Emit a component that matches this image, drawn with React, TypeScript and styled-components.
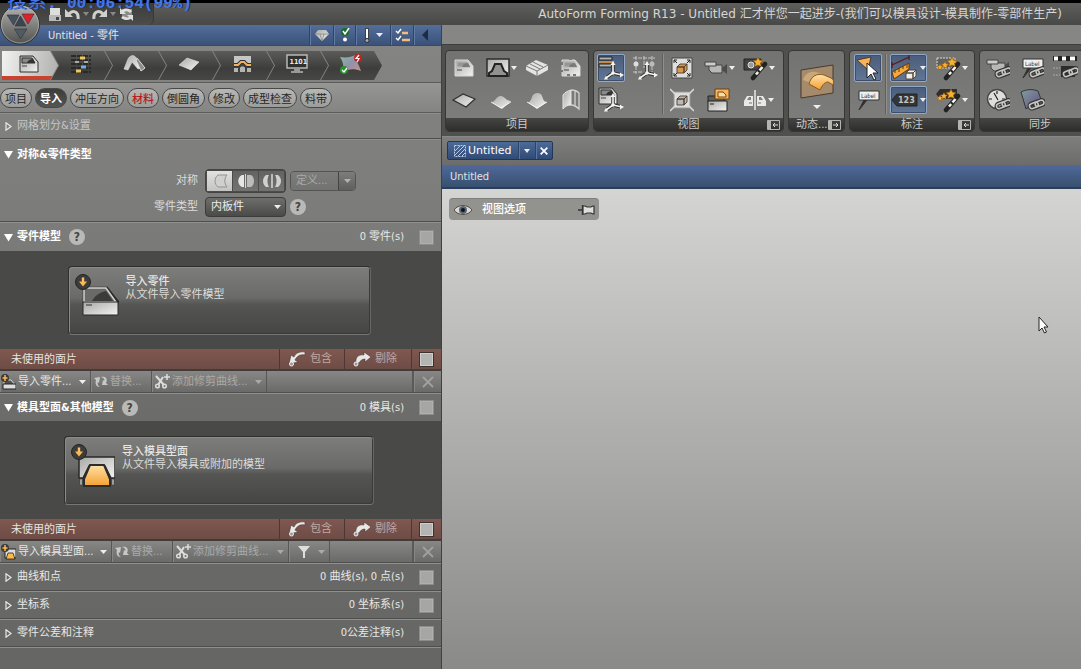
import React from "react";
import styled, { createGlobalStyle, css } from "styled-components";

const ui = `"DejaVu Sans Condensed", "Noto Sans CJK SC", sans-serif`;
const wide = `"DejaVu Sans", "Noto Sans CJK SC", sans-serif`;
const cjk = `"Noto Sans CJK SC", sans-serif`;

const GlobalStyle = createGlobalStyle`
  * { box-sizing: border-box; }
  body { margin: 0; background: #6b6b69; font: 11px/14px ${ui}; color: #e4e4e2; }
  button, select, input { font: inherit; color: inherit; margin: 0; }
  button { border: 0; background: none; padding: 0; }
  svg { display: block; flex: none; }
  h1, h2, h3 { margin: 0; font-size: inherit; font-weight: normal; }
`;

/* ---------- frame ---------- */
const Window = styled.div`
  display: flex; flex-direction: column; min-height: 100vh; position: relative; overflow: hidden;
`;
const TitleBar = styled.header`
  display: flex; justify-content: space-between; height: 25px; border-top: 3px solid #000;
  background: linear-gradient(#5e5e5c, #484846);
`;
const QuickBar = styled.div`
  display: flex; align-items: center; gap: 3px; width: 154px; padding-left: 48px;
  border-right: 1px solid #383836; border-bottom-right-radius: 6px;
  background: linear-gradient(#3c3c3a, #4c4c4a);
`;
const AppTitle = styled.h1`
  padding-right: 19px; font: 12px/22px ${wide}; white-space: nowrap; color: #d6d6d4;
`;
const Overlay = styled.div`
  position: absolute; left: 7px; top: -11px; z-index: 3; white-space: nowrap;
  font: 20px/22px ${cjk}; color: #4676e4; text-shadow: 1px 0 #16306e;
`;
const Clock = styled.span`font: 700 16px/22px "Liberation Mono", monospace;`;
const LogoButton = styled.button`position: absolute; left: 0; top: 4px; z-index: 2;`;
const Body = styled.div`
  flex: 1; display: grid; grid-template-columns: minmax(0, 441px) minmax(0, 1fr);
`;

/* ---------- left panel ---------- */
const Panel = styled.aside`
  display: flex; flex-direction: column; min-width: 0;
  background: linear-gradient(#858583, #7a7a78 35%, #6c6c6a 60%, #666664);
`;
const PanelHead = styled.div`
  display: flex; height: 21px; border-bottom: 1px solid #3a4a66;
  background: linear-gradient(#536e9b, #3a5279);
`;
const PanelTitle = styled.h2`flex: 1; padding-left: 48px; line-height: 21px;`;
const HeadButton = styled.button<{ $w: number }>`
  display: flex; align-items: center; justify-content: center; gap: 6px; width: ${p => p.$w}px;
  border-left: 1px solid #2f4468; box-shadow: inset 1px 0 #627ba5;
`;
const Steps = styled.nav`
  display: flex; padding: 5px 2px 2px; height: 37px; border-bottom: 1px solid #5c5c5a;
`;
const Step = styled.button<{ $active?: boolean }>`
  height: 29px; display: flex; align-items: center; justify-content: center;
  width: 61px; margin-left: -7px; padding: 0 2px 4px 0;
  background: linear-gradient(#5b5b59, #3d3d3b 60%, #474745);
  clip-path: polygon(0 0, calc(100% - 8px) 0, 100% 50%, calc(100% - 8px) 100%, 0 100%, 8px 50%);
  ${p => p.$active && css`
    width: 56px; margin-left: 0; border-bottom: 4px solid #c8432f; padding-bottom: 0;
    background: linear-gradient(100deg, #f2f2f0, #b0b0ae);
    clip-path: polygon(0 0, calc(100% - 8px) 0, 100% 50%, calc(100% - 8px) 100%, 0 100%);
  `}
`;
const Pills = styled.nav`
  display: flex; align-items: center; gap: 3px; height: 30px; border-bottom: 1px solid #5c5c5a;
  background: linear-gradient(#969694, #848482);
`;
const Pill = styled.button<{ $tone?: "active" | "alert" }>`
  height: 20px; padding: 0 4px; border: 1px solid #484846; border-radius: 10px;
  font: 11px/16px ${cjk}; white-space: nowrap; color: #262624;
  background: linear-gradient(#b8b8b6, #9c9c9a);
  ${p => p.$tone === "active" && css`background: linear-gradient(#3c3c3a, #555553); color: #fff; font-weight: 700;`}
  ${p => p.$tone === "alert" && css`color: #b81c14; font-weight: 500;`}
`;
const SectionHead = styled.div<{ $h: number; $dim?: boolean }>`
  display: flex; align-items: center; height: ${p => p.$h}px; padding: 0 7px 0 4px;
  border-top: 1px solid #8f8f8d; color: ${p => (p.$dim ? "#c6c6c4" : "#e8e8e6")};
`;
const Section = styled.section<{ $line?: boolean }>`
  ${p => p.$line && css`border-bottom: 1px solid #4e4e4c;`}
`;
const Toggle = styled.button<{ $bold?: boolean }>`
  display: flex; align-items: center; gap: 4px; white-space: nowrap;
  font: ${p => (p.$bold ? 700 : 400)} 11px/16px ${ui}; color: ${p => (p.$bold ? "#fff" : "inherit")};
`;
const Help = styled.button`
  width: 16px; height: 16px; margin-left: 8px; border-radius: 50%; background: #b9b9b7; color: #444442;
  font: 700 12px/16px ${ui};
`;
const Count = styled.span`margin-left: auto; padding-right: 15px; white-space: nowrap;`;
const Check = styled.input<{ $framed?: boolean }>`
  appearance: none; width: 15px; height: 15px; border: 1px solid ${p => (p.$framed ? "#3e3230" : "#8c8c8a")};
  background: ${p => (p.$framed ? "#b4b4b2" : "#a6a6a4")}; box-shadow: inset 0 0 0 1px ${p => (p.$framed ? "#cfcfcd" : "#b0b0ae")};
`;
const Form = styled.div`
  display: grid; grid-template-columns: 198px 1fr; column-gap: 7px; row-gap: 2px; padding: 0 0 2px;
`;
const FormLabel = styled.label`text-align: right; align-self: center; color: #dcdcda;`;
const Line = styled.div`display: flex; align-items: center; gap: 4px; height: 24px; ${Help} { margin-left: 0; }`;
const Segments = styled.div`
  display: flex; width: 81px; height: 24px; padding: 1px; border: 1px solid #444442; border-radius: 4px; background: #4c4c4a; gap: 1px;
`;
const Segment = styled.button<{ $on?: boolean }>`
  flex: 1; display: flex; align-items: center; justify-content: center;
  background: ${p => (p.$on ? "linear-gradient(#e2e2e0, #c4c4c2)" : "linear-gradient(#636361, #737371)")};
`;
const Split = styled.div`
  display: flex; width: 66px; height: 20px; border: 1px solid #545452; border-radius: 4px; overflow: hidden;
`;
const SplitMain = styled.button`flex: 1; text-align: left; padding-left: 5px; color: #a9a9a7; background: linear-gradient(#7c7c7a, #737371);`;
const SplitDrop = styled.button`
  width: 17px; display: flex; align-items: center; justify-content: center; border-left: 1px solid #444442;
  background: linear-gradient(#7d7d7b, #5f5f5d);
`;
const SelectBox = styled.div`position: relative; width: 81px; height: 20px;`;
const Select = styled.select`
  appearance: none; width: 100%; height: 20px; padding: 0 5px; border: 1px solid #3c3c3a; border-radius: 4px;
  background: linear-gradient(#6e6e6c, #4a4a48); color: #ececea; line-height: 16px;
`;
const SelectCaret = styled.span`position: absolute; right: 5px; top: 8px; pointer-events: none;`;
const Well = styled.div`display: flex; justify-content: center; height: 98px; padding: 15px 3px 14px 0; background: #494947;`;
const ImportCard = styled.button<{ $w: number }>`
  display: flex; align-items: flex-start; width: ${p => p.$w}px; padding: 7px 6px; gap: 7px; text-align: left;
  border: 1px solid #2e2e2c; border-right-color: #666664; border-bottom-color: #767674; border-radius: 4px;
  box-shadow: inset 1px 1px #8c8c8a, inset -1px -1px #3a3a38;
  background: linear-gradient(#7d7d7b, #6a6a68 46%, #555553 56%, #454543);
`;
const CardText = styled.span`
  display: block; padding-top: 1px; line-height: 13px; color: #dcdcda; white-space: nowrap;
  strong { display: block; color: #e6e6e4; font-weight: 500; }
`;
const UnusedBar = styled.div`
  display: flex; height: 22px; border-bottom: 2px solid #413c3a; background: linear-gradient(#7f5850, #6e4c46);
`;
const UnusedLabel = styled.span`flex: 1; padding-left: 11px; line-height: 22px;`;
const UnusedCell = styled.button<{ $w: number }>`
  display: flex; align-items: center; gap: 4px; width: ${p => p.$w}px; padding-left: 8px;
  border-left: 1px solid #4d3733; color: #bea8a4;
`;
const UnusedTick = styled.span`display: flex; align-items: center; padding: 0 7px; border-left: 1px solid #4d3733;`;
const Tools = styled.div`
  display: flex; height: 22px; border-bottom: 1px solid #50504e; background: linear-gradient(#878785, #6a6a68);
`;
const Tool = styled.button<{ $w?: number; $off?: boolean }>`
  display: flex; align-items: center; gap: 2px; flex: ${p => (p.$w ? `0 0 ${p.$w}px` : "1")}; white-space: nowrap;
  border-right: 1px solid #575755; padding: 0 4px 0 ${p => (p.$off ? 3 : 1)}px; color: ${p => (p.$off ? "#aaaaa8" : "#e6e6e4")};
  box-shadow: inset 1px 0 #868684;
  &:last-child { border: 0; padding: 0; justify-content: center; }
`;
const ToolText = styled.span`flex: 1; text-align: left;`;
const Filler = styled.span`flex: 1; border-right: 2px solid #5a5a58;`;

/* ---------- right side ---------- */
const Work = styled.main`display: flex; flex-direction: column; min-width: 0; border-left: 1px solid #41413f;`;
const Strip = styled.div`height: 20px; background: #868685; border-bottom: 1px solid #3e3e3c;`;
const Ribbon = styled.div`display: flex; gap: 4px; height: 91px; padding: 5px 3px 4px; background: #50504e; overflow: hidden;`;
const Group = styled.section<{ $w: number }>`
  flex: 0 0 ${p => p.$w}px; display: flex; flex-direction: column; border: 1px solid #373735; border-radius: 4px;
  overflow: hidden; background: linear-gradient(#737371, #7e7e7c);
`;
const GroupBody = styled.div`display: flex; flex: 1; padding-top: 1px;`;
const GroupName = styled.h3`
  display: flex; align-items: center; justify-content: center; height: 13px; line-height: 13px; position: relative;
  background: linear-gradient(#454543, #2d2d2b); color: #cdcdcb; white-space: nowrap;
`;
const LeadName = styled.span`flex: 1; padding-left: 7px;`;
const Expand = styled.button`position: absolute; right: 3px; top: 2px;`;
const Cells = styled.div<{ $cols: string }>`
  display: grid; grid-template-columns: ${p => p.$cols}; grid-template-rows: 32px 32px; align-items: center; justify-items: center;
`;
const Sep = styled.div`width: 2px; margin: 2px 0 4px; border-left: 1px solid #5f5f5d; border-right: 1px solid #90908e;`;
const IconButton = styled.button<{ $on?: boolean }>`
  display: flex; align-items: center; justify-content: center; gap: 1px; min-width: 28px; height: 28px;
  border: 1px solid ${p => (p.$on ? "#91a8c8" : "transparent")}; border-radius: 2px;
  ${p => p.$on && css`background: linear-gradient(#4a5d7a, #617795); box-shadow: inset 0 0 0 1px #3c4f6c;`}
`;
const BigButton = styled.button`flex: 1; display: flex; flex-direction: column; align-items: center; padding-top: 11px; gap: 4px;`;
const Tabs = styled.div`height: 29px; padding: 4px 5px; background: linear-gradient(#7e7e7c, #6c6c6a); border-top: 1px solid #888886;`;
const DocTab = styled.div`
  display: flex; width: 106px; height: 19px; border: 1px solid #233653; border-radius: 2px;
  background: linear-gradient(#4d6b98, #2f4a75);
`;
const DocName = styled.button`flex: 1; display: flex; align-items: center; gap: 2px; padding-left: 6px; font: 11px/16px ${wide}; color: #fff;`;
const DocAction = styled.button`width: 17px; display: flex; align-items: center; justify-content: center; border-left: 1px solid #2c4469; box-shadow: inset 1px 0 #5c77a2;`;
const DocHead = styled.h2`
  height: 24px; padding-left: 8px; line-height: 23px; border-bottom: 2px solid #2b3d59;
  background: linear-gradient(#50699a, #38506f);
`;
const Canvas = styled.div`flex: 1; position: relative; padding: 9px 7px; background: linear-gradient(#d4d4d2, #8a8a88);`;
const ViewOptions = styled.button`
  display: flex; align-items: center; width: 150px; height: 22px; padding: 0 4px; border-radius: 4px;
  background: #92928f; border-top: 1px solid #7e7e7c; color: #fff;
  span { flex: 1; text-align: left; padding-left: 9px; font-weight: 500; }
`;
const Cursor = styled.span`position: absolute; left: 596px; top: 127px;`;

/* ---------- drawings ---------- */
type DrawProps = { w?: number; h?: number; box?: string; children: React.ReactNode };
const Draw = ({ w = 24, h = 24, box, children }: DrawProps) => (
  <svg width={w} height={h} viewBox={box ?? `0 0 ${w} ${h}`} fill="none" aria-hidden="true">{children}</svg>
);
const PaintStore = styled.svg`position: absolute;`;
const Paints = () => (
  <PaintStore width="0" height="0" aria-hidden="true">
    <defs>
      <linearGradient id="silver" x1="0" y1="0" x2="1" y2="1"><stop stopColor="#a8a8a6" /><stop offset="1" stopColor="#f4f4f2" /></linearGradient>
      <linearGradient id="gold" x1="0" y1="0" x2="0" y2="1"><stop stopColor="#ffe0a8" /><stop offset="1" stopColor="#f5a030" /></linearGradient>
      <linearGradient id="knob" x1="0" y1="0" x2="0" y2="1"><stop stopColor="#b4b4b2" /><stop offset="1" stopColor="#50504e" /></linearGradient>
      <linearGradient id="tint" x1="0" y1="0" x2="1" y2="1"><stop stopColor="#8fb9a0" /><stop offset=".5" stopColor="#8d93ad" /><stop offset="1" stopColor="#cf8f80" /></linearGradient>
      <linearGradient id="violet" x1="0" y1="0" x2="1" y2="1"><stop stopColor="#7f9f9c" /><stop offset=".6" stopColor="#6f6b8c" /><stop offset="1" stopColor="#83708c" /></linearGradient>
    </defs>
  </PaintStore>
);
const Caret = ({ c = "#eeeeec", w = 7 }: { c?: string; w?: number }) => (
  <svg width={w} height={4} viewBox="0 0 8 4" preserveAspectRatio="none" aria-hidden="true"><path d="M0 0h8L4 4z" fill={c} /></svg>
);
const Arrow = ({ open, c = "#e8e8e6" }: { open?: boolean; c?: string }) => (
  <Draw w={9} h={9}>{open ? <path d="M0 1h9L4.500 8.500z" fill="#fff" /> : <path d="M2 .8l5 3.700-5 3.700z" stroke={c} strokeWidth="1.200" />}</Draw>
);
const Door = ({ x = 0, y = 0, dark = false }: { x?: number; y?: number; dark?: boolean }) => (
  <g transform={`translate(${x} ${y})`}>
    <path d="M1 1h13l5 6v10H1z" fill="url(#silver)" stroke={dark ? "#30302e" : "#d8d8d6"} />
    <path d="M3 3h10l3 5H3z" fill={dark ? "#8a8a88" : "#969694"} stroke={dark ? "#30302e" : "#b8b8b6"} />
    <path d="M8 8c1-3 3-4 6-4l2 4z" fill={dark ? "#333331" : "#7a7a78"} />
    <path d="M3 11h5" stroke="#444442" />
  </g>
);
const Axes = () => (
  <g>
    <path d="M15 8v10M15 18l-7 5M15 18l9 2" stroke="#333331" strokeWidth="3.500" />
    <path d="M15 8v10M15 18l-7 5M15 18l9 2" stroke="#f4f4f2" strokeWidth="1.600" />
    <circle cx="15" cy="18" r="1.800" fill="#f4f4f2" /><path d="M12.500 10L15 6l2.500 4zM22 17.500l4 2.500-4 2.500zM10 24.500H6l2-4z" fill="#f4f4f2" />
  </g>
);
const Wand = () => (<><path d="M23 9L11 23" stroke="#222220" strokeWidth="4.500" strokeLinecap="round" /><path d="M20.500 12L14 19.500" stroke="#f4f4f2" strokeWidth="2.600" /><path d="M17.600 15.400l-1.500 1.700" stroke="#222220" strokeWidth="3" /></>);
const Star = ({ x, y, s = 1 }: { x: number; y: number; s?: number }) => (
  <path transform={`translate(${x} ${y}) scale(${s})`} d="M0-5l1.500 3.200 3.500.4-2.600 2.400.8 3.600L0 3l-3.200 1.600.8-3.600L-5-1.400l3.500-.4z" fill="#f8b030" stroke="#8a5510" strokeWidth=".6" />
);
const Chain = ({ x = 11, y = 14 }: { x?: number; y?: number }) => (
  <g transform={`translate(${x} ${y}) rotate(-20)`} strokeWidth="4" stroke="#333331"><rect x="-2" y="2" width="9" height="5" rx="2.500" /><rect x="4" y="2" width="9" height="5" rx="2.500" /><g stroke="#c4c4c2" strokeWidth="1.600"><rect x="-2" y="2" width="9" height="5" rx="2.500" /><rect x="4" y="2" width="9" height="5" rx="2.500" /></g></g>
);
const LabelNote = () => (<><path d="M8 12L3 22l8-10" fill="#30302e" stroke="#30302e" /><path d="M3 3h20v9H3z" fill="#efefed" stroke="#333331" /><text x="5" y="10" fontSize="6" fontFamily="DejaVu Sans Condensed, sans-serif" fill="#333331">Label</text></>);
const Box3d = ({ x, y, c }: { x: number; y: number; c: string }) => (
  <g transform={`translate(${x} ${y})`} fill={c} stroke="#4a3c2c" strokeWidth=".9"><path d="M0 3l3-3h7L7 3zM0 3h7v6H0zM7 3l3-3v6L7 9z" /></g>
);
const DropBadge = () => (<><circle cx="8" cy="8" r="7.500" fill="#3c3c3a" stroke="#242422" /><path d="M8 3.500v6" stroke="#ffc070" strokeWidth="2.400" /><path d="M4 7.500h8L8 12.500z" fill="#ffb850" /></>);

const Logo = () => (
  <Draw w={41} h={41}>
    <circle cx="20" cy="20.500" r="19.500" fill="url(#knob)" stroke="#30302e" /><circle cx="20" cy="20.500" r="18.500" stroke="#b4b4b2" strokeWidth=".7" />
    <g stroke="#333338" strokeWidth=".6"><path d="M7 11h12l-5.500 10z" fill="#45525c" /><path d="M22 10h12l-6 10z" fill="#e2202c" /><path d="M20.500 12l5.500 10H15z" fill="#39464f" /><path d="M14.500 25H27l-6.500 10z" fill="#4e5b63" /></g>
  </Draw>
);
const Undo = ({ flip }: { flip?: boolean }) => (
  <Draw w={15} h={14}><g transform={flip ? "translate(15 0) scale(-1 1)" : undefined}><path d="M4 7c4-5 10-2 9 5" stroke="#cfcfcd" strokeWidth="3" /><path d="M0 2v8h8z" fill="#cfcfcd" /></g></Draw>
);
const DieIcon = ({ w = 24 }: { w?: number }) => (
  <Draw w={w} h={20} box="0 0 24 20"><path d="M1 1h22v17H1z" fill="url(#silver)" stroke="#2c2c2a" strokeWidth="1.500" /><path d="M3 18v-3l3-2 3-7h6l3 7 3 2v3z" fill="#92928f" stroke="#222220" strokeWidth="2" /></Draw>
);
const Sheet = ({ dark }: { dark?: boolean }) => (<Draw w={24} h={18}><path d="M1 9l10-6 12 5-9 8z" fill="url(#silver)" stroke={dark ? "#333331" : "#ddd"} strokeWidth={dark ? 1.3 : .5} /></Draw>);
const Bump = ({ tall }: { tall?: boolean }) => (<Draw w={22} h={20}><path d={tall ? "M1 12c2 1 4-1 5-5s8-6 10-1c1 3 2 6 5 6l-10 7z" : "M1 12c3 1 5-5 9-6s6 5 11 5l-9 8z"} fill="url(#silver)" /><path d="M1 12l10 6 10-6" stroke="#fff" strokeWidth=".8" /></Draw>);
const Camera = () => (<Draw w={24} h={18}><path d="M5 6h13v8H8l-3-3z" fill="#b8b8b6" stroke="#444442" /><path d="M1 3h11v4H1z" fill="#ccccca" stroke="#444442" /><path d="M18 9l5-4v10l-5-4z" fill="#4c4c4a" /></Draw>);
const CarHalf = () => (<Draw w={24} h={22}><path d="M1 17v-5l3-5h6v10zM23 17v-5l-3-5h-6v10z" fill="#e8e8e6" /><path d="M4 11l2-3h2v3zM20 11l-2-3h-2v3z" fill="#80807e" /><path d="M6 14h3M15 14h3" stroke="#777775" /><path d="M12 1v20" stroke="#e8e8e6" strokeWidth="1.500" /></Draw>);
const ExpandIcon = ({ flip }: { flip?: boolean }) => (
  <Draw w={13} h={10}><g transform={flip ? "translate(13 0)" : undefined}><path d={flip ? "M-12.500.5h12v9h-12z" : "M.5.500h12v9H.5z"} stroke="#b4b4b2" /><path d={flip ? "M-12 1h3v8h-3z" : "M1 1h3v8H1z"} fill="#b4b4b2" /><path d={flip ? "M-8 5h5M-5 3l2 2-2 2" : "M11 5H6M8 3L6 5l2 2"} stroke="#dededc" /></g></Draw>
);
const PartIcon = () => (
  <Draw w={44} h={44}><path d="M9 14h23l11 14H9z" fill="#4c4c4a" stroke="#292927" strokeWidth="2.500" /><path d="M9 14h22l10 14H9z" fill="#6a6a68" stroke="#d2d2d0" strokeWidth="1.500" /><path d="M17 27c3-6 9-9 14-10l7 10z" fill="#3b3b39" /><path d="M8 28h35v13H8z" fill="url(#silver)" stroke="#292927" /><path d="M11 31h6" stroke="#333331" /><DropBadge /></Draw>
);
const ToolIcon = () => (
  <Draw w={44} h={44}><path d="M8 13h36v21h-4l-6-12H18l-6 12H8z" fill="url(#silver)" stroke="#282826" strokeWidth="1.500" /><path d="M13 42v-7l6-14h14l6 14v7z" fill="url(#gold)" stroke="#2c2c2a" strokeWidth="2" /><path d="M9 35h2v6H9zM41 35h2v6h-2z" fill="#c4c4c2" stroke="#333" strokeWidth=".5" /><DropBadge /></Draw>
);
const Include = () => (<Draw w={18} h={16}><path d="M17 1C11 0 7 3 6 6L3 4 1 13l9-2-3-2c2-4 5-6 10-5z" fill="#e8e8e6" stroke="#4d3733" strokeWidth=".6" /><circle cx="3.500" cy="13" r="2" stroke="#eee" fill="#999" /></Draw>);
const Exclude = () => (<Draw w={18} h={16}><path d="M3 12C2 6 6 3 11 4V1l7 5-6 5V8c-3 0-5 2-6 4z" fill="#e8e8e6" stroke="#4d3733" strokeWidth=".6" /><circle cx="3" cy="13" r="2" stroke="#eee" fill="#999" /></Draw>);
const Swap = () => (<Draw w={14} h={14}><path d="M0 3l6-1-1 6-1-1c-1 2 0 4 2 5C2 12 1 9 2 5zM14 10l-6 0 1-5 1 1c1-2 0-3-3-4 5-1 7 2 5 6z" fill="#c8c8c6" /></Draw>);
const Scissors = () => (<Draw w={15} h={15}><path d="M1 2l8 9M8 3L3 11" stroke="#ddd" strokeWidth="2" /><circle cx="2.500" cy="12" r="1.800" stroke="#ddd" strokeWidth="1.500" /><circle cx="9.500" cy="12" r="1.800" stroke="#ddd" strokeWidth="1.500" /><path d="M9 3h6M12 0v6" stroke="#ddd" strokeWidth="1.500" /></Draw>);
const MiniImport = ({ gold }: { gold?: boolean }) => (
  <Draw w={15} h={16}>{gold ? <><path d="M4 5h11v9H4z" fill="#ddd" stroke="#222" /><path d="M5 15l2-6h5l2 6z" fill="#ffb84a" stroke="#222" strokeWidth=".8" /></> : <><path d="M3 6h7l4 5H3z" fill="#50504e" stroke="#ddd" /><path d="M2 10h13v5H2z" fill="#ddd" stroke="#222" /></>}<circle cx="4" cy="4" r="4" fill="#3a3a38" /><path d="M4 1v6M1.500 4h5" stroke="#ffb850" strokeWidth="1.500" /></Draw>
);
const Cross = ({ c = "#a0a09e", s = 12, t = 1.8 }: { c?: string; s?: number; t?: number }) => (<Draw w={s} h={s} box="0 0 12 12"><path d="M1 1l10 10M11 1L1 11" stroke={c} strokeWidth={t} /></Draw>);
const Cone = ({ side = 0 }: { side?: number }) => (
  <Draw w={24} h={16}>
    {side === 0 && <path d="M10 2h9c-3 4-3 8 0 12h-9c-4-3-4-9 0-12z" fill="#d0d0ce" stroke="#939391" />}
    {side === 1 && <><path d="M10 2v12H8C3 12 3 4 8 2z" fill="#e6e6e4" /><path d="M13 2h4c4 2 4 10 0 12h-4z" fill="#bcbcba" /><path d="M11.500 1v14" stroke="#d8d8d6" /></>}
    {side === 2 && <><path d="M9 2H6C2 5 2 11 6 14h3C7 11 7 5 9 2zM15 2h3c4 3 4 9 0 12h-3c2-3 2-9 0-12z" fill="#d0d0ce" /><path d="M12 1v14" stroke="#d8d8d6" strokeWidth="1.500" /></>}
  </Draw>
);

const stepIcons: [string, React.ReactNode][] = [
  ["零件", <Draw w={22} h={20}><Door x={1} y={1} dark /></Draw>],
  ["方案", <Draw w={22} h={20}><path d="M1 2h20M1 6h20M1 10h20M1 14h20M1 18h20" stroke="#292927" strokeDasharray="5 1" strokeWidth="2" /><path d="M10 4h5M6 17h5" stroke="#f0c660" strokeWidth="3" /><path d="M5 8h4M14 8h4" stroke="#a8a8a6" strokeWidth="2" /><path d="M11 13h5" stroke="#74aee4" strokeWidth="3" /></Draw>],
  ["曲面", <Draw w={24} h={20}><path d="M1 15L5 5c3-5 7-4 9 0l4 9-3 1-6-7-4 8z" fill="url(#silver)" stroke="#ddd" strokeWidth=".6" /><path d="M14 4l8 10-4 3-4-9" fill="#8c8c8a" stroke="#ddd" /></Draw>],
  ["坯料", <Draw w={22} h={16}><path d="M1 9l8-7 12 4-8 8z" fill="url(#silver)" stroke="#eee" strokeWidth=".5" /></Draw>],
  ["工艺", <Draw w={20} h={20}><path d="M1 2h17v9h-3l-3-3H7l-3 3H1z" fill="#c6c6c4" /><path d="M1 11h4l3-3h3l3 3h4" stroke="#30302e" strokeWidth="4" /><path d="M1 11h4l3-3h3l3 3h4" stroke="#f2b060" strokeWidth="2" /><path d="M1 14h4v4H1zM14 14h4v4h-4zM7 18v-4c0-2 5-2 5 0v4z" fill="#b4b4b2" /></Draw>],
  ["模拟", <Draw w={22} h={20}><path d="M1 1h20v13H1z" fill="#30302e" stroke="#b8b8b6" strokeWidth="1.500" /><text x="3.500" y="10" fontSize="7" fontWeight="700" fontFamily="DejaVu Sans Condensed, sans-serif" fill="#e6e6e4">1101</text><path d="M8 15h6v2h3v2H5v-2h3z" fill="#999997" /></Draw>],
  ["评估", <Draw w={26} h={22}><path d="M2 4c6 1 12 0 15-2 1 6 4 10 6 16-7-3-13-2-18 1C6 13 5 9 2 4z" fill="url(#tint)" /><circle cx="20" cy="5" r="4" fill="#c8201c" /><path d="M21 2l-3 3.500h3L19 9" stroke="#fff" strokeWidth="1.200" /><circle cx="6" cy="17" r="4" fill="#2a922a" /><path d="M4 17l2 2 3-4" stroke="#fff" strokeWidth="1.300" /></Draw>],
];

const pills: [string, ("active" | "alert")?][] = [["项目"], ["导入", "active"], ["冲压方向"], ["材料", "alert"], ["倒圆角"], ["修改"], ["成型检查"], ["料带"]];

const UnusedFaces = ({ id }: { id: string }) => (
  <UnusedBar>
    <UnusedLabel id={id}>未使用的面片</UnusedLabel>
    <UnusedCell $w={65}><Include />包含</UnusedCell>
    <UnusedCell $w={67}><Exclude />剔除</UnusedCell>
    <UnusedTick><Check type="checkbox" $framed aria-labelledby={id} /></UnusedTick>
  </UnusedBar>
);

const Summary = ({ title, count, open, help, h }: { title: string; count: string; open?: boolean; help?: boolean; h: number }) => (
  <SectionHead $h={h}>
    <Toggle $bold={open} aria-expanded={!!open}><Arrow open={open} />{title}</Toggle>
    {help && <Help aria-label="帮助">?</Help>}
    <Count>{count}</Count>
    <Check type="checkbox" aria-label={title} />
  </SectionHead>
);

const LeftPanel = () => (
  <Panel>
    <PanelHead>
      <PanelTitle>Untitled - 零件</PanelTitle>
      <HeadButton $w={24} aria-label="质量"><Draw w={14} h={12}><path d="M3 1h8l3 4-7 7-7-7z" fill="url(#silver)" /><path d="M0 5h14M5 5l2 7 2-7" stroke="#888886" strokeWidth=".8" /></Draw></HeadButton>
      <HeadButton $w={22} aria-label="检查"><Draw w={10} h={14}><circle cx="5" cy="4" r="4" fill="#1d6b28" /><path d="M3 3l2 3 4-6" stroke="#fff" strokeWidth="1.500" /><circle cx="5" cy="11.500" r="2" fill="#fff" /></Draw></HeadButton>
      <HeadButton $w={35} aria-label="状态"><Draw w={6} h={15}><path d="M1.500.500h3v10h-3z" fill="#fff" stroke="#222" strokeWidth=".8" /><circle cx="3" cy="12.500" r="2" fill="#aaa" stroke="#333" /></Draw><Caret /></HeadButton>
      <HeadButton $w={23} aria-label="任务"><Draw w={15} h={14}><path d="M1 3l2 2 3-4M1 10l2 2 3-4" stroke="#fff" strokeWidth="1.400" /><path d="M7 5h6M7 12h8" stroke="#f0bd7c" strokeWidth="2.500" /></Draw></HeadButton>
      <HeadButton $w={28} aria-label="收起"><Draw w={16} h={12}><path d="M8 0L2 6l6 6" fill="#1d2c45" /></Draw></HeadButton>
    </PanelHead>
    <Steps>{stepIcons.map(([n, icon], i) => <Step key={n} $active={i === 0} aria-label={n}>{icon}</Step>)}</Steps>
    <Pills>{pills.map(([t, tone]) => <Pill key={t} $tone={tone}>{t}</Pill>)}</Pills>

    <Section $line>
      <SectionHead $h={25} $dim><Toggle aria-expanded={false}><Arrow />网格划分&amp;设置</Toggle></SectionHead>
    </Section>
    <Section $line>
      <SectionHead $h={30}><Toggle $bold aria-expanded><Arrow open />对称&amp;零件类型</Toggle></SectionHead>
      <Form>
        <FormLabel as="span">对称</FormLabel>
        <Line>
          <Segments role="group" aria-label="对称">
            <Segment $on aria-label="无"><Cone /></Segment><Segment aria-label="对称"><Cone side={1} /></Segment><Segment aria-label="双件"><Cone side={2} /></Segment>
          </Segments>
          <Split><SplitMain>定义...</SplitMain><SplitDrop aria-label="更多"><Caret c="#b4b4b2" /></SplitDrop></Split>
        </Line>
        <FormLabel htmlFor="part-type">零件类型</FormLabel>
        <Line>
          <SelectBox><Select id="part-type"><option>内板件</option></Select><SelectCaret><Caret /></SelectCaret></SelectBox>
          <Help aria-label="帮助">?</Help>
        </Line>
      </Form>
    </Section>

    <Section>
      <Summary title="零件模型" count="0 零件(s)" open help h={29} />
      <Well><ImportCard $w={303}><PartIcon /><CardText><strong>导入零件</strong>从文件导入零件模型</CardText></ImportCard></Well>
      <UnusedFaces id="unused-part" />
      <Tools>
        <Tool $w={91}><MiniImport /><ToolText>导入零件...</ToolText><Caret /></Tool>
        <Tool $w={61} $off><Swap /><ToolText>替换...</ToolText></Tool>
        <Tool $w={115} $off><Scissors /><ToolText>添加修剪曲线...</ToolText><Caret c="#aaaaa8" /></Tool>
        <Filler /><Tool $w={27} $off aria-label="删除"><Cross /></Tool>
      </Tools>
    </Section>
    <Section>
      <Summary title="模具型面&其他模型" count="0 模具(s)" open help h={28} />
      <Well><ImportCard $w={310}><ToolIcon /><CardText><strong>导入模具型面</strong>从文件导入模具或附加的模型</CardText></ImportCard></Well>
      <UnusedFaces id="unused-tool" />
      <Tools>
        <Tool $w={112}><MiniImport gold /><ToolText>导入模具型面...</ToolText><Caret /></Tool>
        <Tool $w={61} $off><Swap /><ToolText>替换...</ToolText></Tool>
        <Tool $w={116} $off><Scissors /><ToolText>添加修剪曲线...</ToolText><Caret c="#aaaaa8" /></Tool>
        <Tool $w={41} $off aria-label="筛选"><ToolText><Draw w={22} h={14}><path d="M6 1h12l-5 6v6h-2V7z" fill="#dededc" /></Draw></ToolText><Caret c="#aaaaa8" /></Tool>
        <Filler /><Tool $w={27} $off aria-label="删除"><Cross /></Tool>
      </Tools>
    </Section>
    <Section $line><Summary title="曲线和点" count="0 曲线(s), 0 点(s)" h={27} /></Section>
    <Section $line><Summary title="坐标系" count="0 坐标系(s)" h={27} /></Section>
    <Section $line><Summary title="零件公差和注释" count="0公差注释(s)" h={27} /></Section>
    <SectionHead $h={10} />
  </Panel>
);

const IB = ({ on, drop, name, children }: { on?: boolean; drop?: boolean; name: string; children: React.ReactNode }) => (
  <IconButton $on={on} aria-label={name}>{children}{drop && <Caret w={6} />}</IconButton>
);

const RibbonBar = () => (
  <Ribbon>
    <Group $w={144}>
      <GroupBody>
        <Cells $cols="36px 38px 34px 34px">
          <IB name="零件"><Draw w={20} h={20}><Door y={1} /></Draw></IB>
          <IB name="模具" drop><DieIcon /></IB>
          <IB name="工艺"><Draw w={24} h={18}><path d="M1 7l10-6 12 5v5l-11 6L1 11z" fill="#e4e4e2" /><path d="M1 7l11 5 11-6M12 12v5M5 5l10 5M8 3l10 5" stroke="#777775" /></Draw></IB>
          <IB name="方案"><Draw w={20} h={20}><Door y={1} /><path d="M1 4v3M1 12v2M6 17h3M12 17h3M8 1h3" stroke="#777775" strokeWidth="2" /></Draw></IB>
          <IB name="坯料"><Sheet dark /></IB>
          <IB name="曲面"><Bump /></IB>
          <IB name="拉延"><Bump tall /></IB>
          <IB name="剖面"><Draw w={20} h={22}><path d="M2 6c2-3 5-4 8-5v15c-3 0-6 1-8 4z" fill="url(#silver)" stroke="#e4e4e2" /><path d="M10 1c3 0 6 1 8 3v16c-2-2-5-4-8-4M14 2v15" stroke="#d2d2d0" strokeWidth="1.300" /></Draw></IB>
        </Cells>
      </GroupBody>
      <GroupName>项目</GroupName>
    </Group>

    <Group $w={191}>
      <GroupBody>
        <Cells $cols="34px 34px">
          <IB on name="冲压坐标"><Draw w={26} h={26}><path d="M1 2h13v3H1zM1 9h13v3H1z" fill="#b4b4b2" stroke="#222" /><path d="M1 7h15" stroke="#c48b4a" strokeWidth="2" /><Axes /></Draw></IB>
          <IB name="工位坐标"><Draw w={26} h={26}><path d="M4 1v18M12 1v12M20 1v18M1 3h22M1 17h10" stroke="#c4c4c2" strokeDasharray="4 1" /><circle cx="4" cy="9" r="2.500" fill="#ddd" /><circle cx="20" cy="9" r="2.500" fill="#bbb" /><Axes /></Draw></IB>
          <IB name="零件坐标"><Draw w={26} h={26}><Door dark /><Axes /></Draw></IB>
        </Cells>
        <Sep />
        <Cells $cols="36px 38px 40px">
          <IB name="全部显示"><Draw w={22} h={22}><path d="M1 1h20v20H1z" fill="#dededc" stroke="#444442" /><path d="M3 6V3h3M16 3h3v3M19 16v3h-3M6 19H3v-3M3 3l3 3M19 3l-3 3M19 19l-3-3M3 19l3-3" stroke="#222220" /><Box3d x={6} y={7} c="#d89a50" /></Draw></IB>
          <IB name="视角" drop><Camera /></IB>
          <IB name="截图" drop><Draw w={26} h={26}><path d="M2 4h17v11H2z" fill="#444442" stroke="#222" /><circle cx="9" cy="10" r="3" fill="#999" stroke="#ddd" /><Wand /><Star x={16} y={7} /></Draw></IB>
          <IB name="缩放"><Draw w={24} h={24}><path d="M4 4h16v16H4z" fill="#dededc" stroke="#999" /><path d="M0 1l5 5M24 1l-5 5M24 23l-5-5M0 23l5-5" stroke="#ddd" strokeWidth="1.500" /><Box3d x={7} y={8} c="#bababa" /></Draw></IB>
          <IB name="窗口"><Draw w={26} h={24}><path d="M2 8h13l5 6H2z" fill="#5c5c5a" stroke="#222" /><path d="M2 13h19v10H2z" fill="url(#silver)" stroke="#222" /><path d="M4 16h4" stroke="#222" /><path d="M9 1h14v10H9z" fill="#f7b45a" stroke="#6a4010" /><path d="M12 9V4h5l3 3v2z" fill="#ffdca4" stroke="#7a4510" /></Draw></IB>
          <IB name="镜像" drop><CarHalf /></IB>
        </Cells>
      </GroupBody>
      <GroupName>视图<Expand aria-label="展开视图"><ExpandIcon /></Expand></GroupName>
    </Group>

    <Group $w={57}>
      <GroupBody>
        <BigButton aria-label="动态剖面"><Draw w={36} h={38}><path d="M2 7l32-5v28L2 35z" fill="#a68a6c" stroke="#4a3a2a" /><path d="M4 17c2-7 8-9 13-8l9 3-12 9z" fill="#c8a878" /><path d="M10 21c2-8 8-11 15-9l7 3c3 2 3 4 2 7l-5-3c-4 0-6 4-8 8z" fill="url(#gold)" stroke="#8a5a18" /></Draw><Caret w={8} /></BigButton>
      </GroupBody>
      <GroupName><LeadName>动态...</LeadName><Expand aria-label="展开动态剖面"><ExpandIcon flip /></Expand></GroupName>
    </Group>

    <Group $w={126}>
      <GroupBody>
        <Cells $cols="35px">
          <IB on name="选择"><Draw w={24} h={26}><path d="M1 5l14-3-3 13z" fill="#f7b45a" stroke="#4a3a2a" /><path d="M11 8v15l4-4 3 6 2-1-3-6h5z" fill="#fff" stroke="#222" /></Draw></IB>
          <IB name="标签"><Draw w={24} h={24}><LabelNote /></Draw></IB>
        </Cells>
        <Sep />
        <Cells $cols="42px 44px">
          <IB on drop name="测量"><Draw w={28} h={26}><path d="M1 17L18 8v6L3 24z" fill="#f7a83c" stroke="#5a3a10" /><path d="M4 15v3M8 13v4M12 11v3M16 9v4" stroke="#5a3a10" /><path d="M1 10L18 2M1 7v6M18 0v5" stroke="#5a1818" strokeWidth="1.300" /><Box3d x={15} y={15} c="#eee" /></Draw></IB>
          <IB drop name="自动测量"><Draw w={26} h={26}><path d="M2 3h18v10H2z" stroke="#ddd" strokeDasharray="2 1" fill="#61615f" /><Wand /><Star x={5} y={12} s={0.6} /><Star x={10} y={10} s={0.7} /><Star x={17} y={7} /></Draw></IB>
          <IB on drop name="数值"><Draw w={28} h={22}><path d="M1 11l5-6h20v12H6z" fill="#353533" stroke="#222" /><text x="7" y="14" fontSize="8" fontFamily="DejaVu Sans, sans-serif" fontWeight="700" fill="#c4c4c2">123</text></Draw></IB>
          <IB drop name="自动数值"><Draw w={26} h={26}><path d="M1 7l4-5h17v10H5z" fill="#2e2e2c" /><Wand /><Star x={5} y={11} s={0.6} /><Star x={9} y={9} s={0.7} /><Star x={16} y={7} /></Draw></IB>
        </Cells>
      </GroupBody>
      <GroupName>标注<Expand aria-label="展开标注"><ExpandIcon /></Expand></GroupName>
    </Group>

    <Group $w={122}>
      <GroupBody>
        <Cells $cols="35px 33px 34px">
          <IB name="同步视角"><Draw w={24} h={24}><path d="M5 7h14v8H8l-3-3z" fill="#b8b8b6" stroke="#444442" /><path d="M1 4h11v4H1z" fill="#ccccca" stroke="#444442" /><path d="M19 9l4-3v10l-4-3z" fill="#4c4c4a" /><Chain /></Draw></IB>
          <IB name="同步标签"><Draw w={24} h={24}><LabelNote /><Chain /></Draw></IB>
          <IB name="同步动画"><Draw w={26} h={26}><path d="M1 1h24v5H1z" fill="#222220" /><path d="M2 3.500h4M10 3.500h4M18 3.500h5" stroke="#fff" strokeWidth="4" /><path d="M9 11h14v11H9z" fill="#2c2c2a" /><path d="M1 13h7M1 20h7" stroke="#aaa" strokeDasharray="2 1" /><Chain x={12} y={15} /></Draw></IB>
          <IB name="同步时间"><Draw w={24} h={24}><circle cx="11" cy="11" r="9.500" fill="#dededc" stroke="#444442" strokeWidth="1.500" /><path d="M11 3v3M11 16v3M3 11h3M16 11h3M8 5l4 7" stroke="#222220" strokeWidth="1.200" /><Chain /></Draw></IB>
          <IB name="同步结果"><Draw w={26} h={24}><path d="M2 4c6-3 12-3 17-1l5 14c-6-1-12 0-17 4z" fill="url(#violet)" stroke="#333338" /><Chain /></Draw></IB>
        </Cells>
      </GroupBody>
      <GroupName>同步</GroupName>
    </Group>
  </Ribbon>
);

export default function App() {
  return (
    <Window>
      <GlobalStyle />
      <Paints />
      <Overlay>搜索：<Clock>00:06:54(99%)</Clock></Overlay>
      <TitleBar>
        <QuickBar>
          <button aria-label="保存"><Draw w={14} h={15}><path d="M2 1h10v12H2z" fill="#dededc" /><path d="M1 8h12v6H1z" fill="#b8b8b6" /><path d="M8 10h3v3H8z" fill="#444442" /></Draw></button>
          <button aria-label="撤销"><Undo /></button><Caret w={6} c="#888886" />
          <button aria-label="重做"><Undo flip /></button><Caret w={6} c="#888886" />
          <button aria-label="刷新"><Draw w={15} h={15}><path d="M3 2h10v10H3z" fill="#8a8a88" /><path d="M1 7V1l2 2c4-3 8-1 10 1l-2 2C9 4 7 4 5 5l2 2zM14 8v6l-2-2c-4 2-7 1-10-1l2-2c2 1 4 2 6 1L8 8z" fill="#dededc" /></Draw></button>
        </QuickBar>
        <AppTitle>AutoForm Forming R13 - Untitled 汇才伴您一起进步-(我们可以模具设计-模具制作-零部件生产)</AppTitle>
      </TitleBar>
      <LogoButton aria-label="AutoForm"><Logo /></LogoButton>
      <Body>
        <LeftPanel />
        <Work>
          <Strip />
          <RibbonBar />
          <Tabs>
            <DocTab>
              <DocName><Draw w={12} h={12}><path d="M.5.500h11v11H.5z" stroke="#c4ccd8" strokeDasharray="2 1" /><path d="M1 6l5-5M1 10l9-9M4 11l7-7M8 11l3-3" stroke="#c4ccd8" /></Draw>Untitled</DocName>
              <DocAction aria-label="视图列表"><Caret w={6} /></DocAction>
              <DocAction aria-label="关闭"><Cross c="#fff" s={8} t={2.6} /></DocAction>
            </DocTab>
          </Tabs>
          <DocHead>Untitled</DocHead>
          <Canvas>
            <ViewOptions>
              <Draw w={20} h={12}><path d="M1 6c4-6 14-6 18 0-4 6-14 6-18 0z" fill="#d8d8d6" stroke="#5c4c40" /><circle cx="10" cy="6" r="4" fill="#55697a" /><circle cx="10" cy="6" r="2" fill="#111" /></Draw>
              <span>视图选项</span>
              <Draw w={17} h={12}><path d="M0 6h4M4.500 1v10" stroke="#333331" strokeWidth="1.300" /><path d="M5 2h2l2 1h4l2-1h1v8h-1l-2-1H9l-2 1H5z" fill="#dededc" stroke="#333331" strokeWidth="1.200" /></Draw>
            </ViewOptions>
            <Cursor><Draw w={11} h={18}><path d="M1 1v14l3-3 2.500 5 2-1L6 11h4z" fill="#fff" stroke="#222220" /></Draw></Cursor>
          </Canvas>
        </Work>
      </Body>
    </Window>
  );
}
